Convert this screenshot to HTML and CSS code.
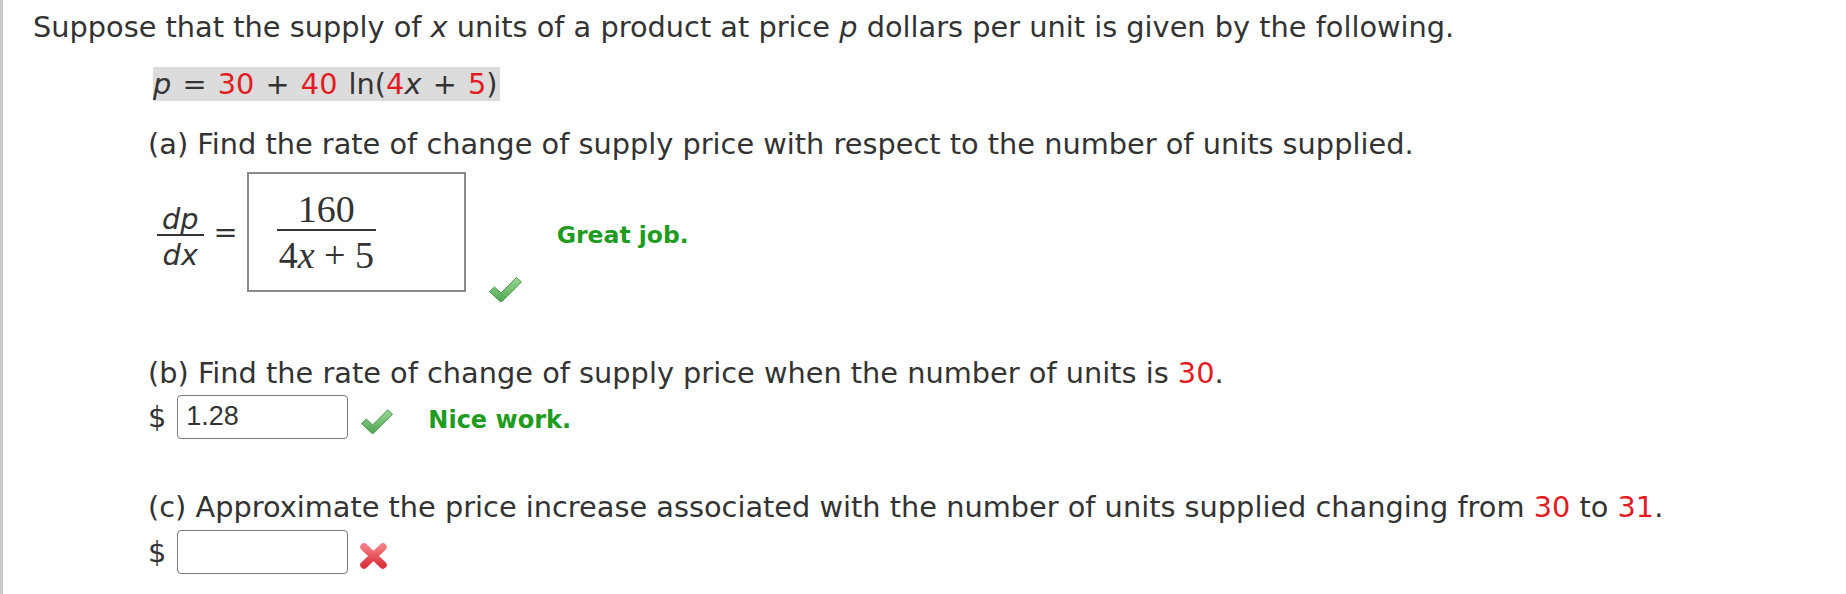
FILE: index.html
```html
<!DOCTYPE html>
<html lang="en">
<head>
<meta charset="utf-8">
<title>Supply price question</title>
<link rel="stylesheet" href="styles.css">
</head>
<body>
<div class="page">
  <p class="intro">Suppose that the supply of <i>x</i> units of a product at price <i>p</i> dollars per unit is given by the following.</p>
  <p class="eqn"><span class="hl"><i>p</i> = <span class="red">30</span> + <span class="red">40</span> ln(<span class="red">4</span><i>x</i> + <span class="red">5</span>)</span></p>

  <div class="part">
    <p class="prompt first">(a) Find the rate of change of supply price with respect to the number of units supplied.</p>
    <div class="row row-a">
      <span class="frac frac-sans"><span class="num"><i>dp</i></span><span class="den"><i>dx</i></span></span>
      <span class="equals">=</span>
      <div class="mathbox">
        <span class="frac frac-serif"><span class="num">160</span><span class="den">4<i>x</i> + 5</span></span>
      </div>
      <svg class="check check-a" width="35" height="27" viewBox="0 0 35 27" aria-hidden="true">
        <defs>
          <linearGradient id="cg1" x1="0" y1="0" x2="0" y2="1">
            <stop offset="0" stop-color="#9ad89a"/>
            <stop offset="1" stop-color="#4fa64f"/>
          </linearGradient>
        </defs>
        <path d="M1.5 15.5 L6.5 11 L13 17 L28.5 1.5 L33.5 6 L14.5 25 Q13 26.5 11.5 25 Z" fill="url(#cg1)" stroke="#4a9a4a" stroke-width="1" stroke-linejoin="round"/>
      </svg>
      <span class="feedback fb-a">Great job.</span>
    </div>
  </div>

  <div class="part">
    <p class="prompt second">(b) Find the rate of change of supply price when the number of units is <span class="red">30</span>.</p>
    <div class="row row-b">
      <span class="dollar">$</span>
      <span class="input">1.28</span>
      <svg class="check check-b" width="34" height="27" viewBox="0 0 35 27" aria-hidden="true">
        <defs>
          <linearGradient id="cg2" x1="0" y1="0" x2="0" y2="1">
            <stop offset="0" stop-color="#9ad89a"/>
            <stop offset="1" stop-color="#4fa64f"/>
          </linearGradient>
        </defs>
        <path d="M1.5 15.5 L6.5 11 L13 17 L28.5 1.5 L33.5 6 L14.5 25 Q13 26.5 11.5 25 Z" fill="url(#cg2)" stroke="#4a9a4a" stroke-width="1" stroke-linejoin="round"/>
      </svg>
      <span class="feedback fb-b">Nice work.</span>
    </div>
  </div>

  <div class="part">
    <p class="prompt third">(c) Approximate the price increase associated with the number of units supplied changing from <span class="red">30</span> to <span class="red">31</span>.</p>
    <div class="row row-c">
      <span class="dollar">$</span>
      <span class="input"></span>
      <svg class="cross" width="29" height="28" viewBox="0 0 29 28" aria-hidden="true">
        <defs>
          <linearGradient id="xg" x1="0" y1="0" x2="0" y2="1">
            <stop offset="0" stop-color="#f27a80"/>
            <stop offset="1" stop-color="#dc3540"/>
          </linearGradient>
        </defs>
        <path d="M5 5 L24 23 M24 5 L5 23" stroke="url(#xg)" stroke-width="7.5" stroke-linecap="round" fill="none"/>
      </svg>
    </div>
  </div>
</div>
</body>
</html>
```

FILE: styles.css
```css
html, body {
  margin: 0;
  padding: 0;
  background: #ffffff;
}

body {
  font-family: "DejaVu Sans", Verdana, sans-serif;
  color: #333333;
}

.page {
  box-sizing: border-box;
  min-height: 594px;
  border-left: 3px solid #c9c9c9;
  padding: 10px 0 0 30px;
  font-size: 28.8px;
  line-height: 34px;
}

p {
  margin: 0;
}

i {
  font-style: italic;
}

.red {
  color: #e31b23;
}

.eqn {
  margin: 23px 0 0 120px;
  word-spacing: 2px;
}

.hl {
  background: #dcdcdc;
  padding-right: 2px;
}

.part {
  margin-left: 115px;
}

.prompt.first {
  margin-top: 26px;
}

.prompt.second {
  margin-top: 64px;
}

.prompt.third {
  margin-top: 51px;
}

.row {
  display: flex;
  align-items: center;
}

.row-a {
  margin: 11px 0 0 9px;
}

.frac {
  display: inline-flex;
  flex-direction: column;
  align-items: stretch;
  text-align: center;
}

.frac-sans {
  line-height: 28.5px;
  margin-top: 10px;
}

.frac-sans .num {
  padding: 0 5px;
  border-bottom: 2px solid #333333;
}

.frac-sans .den {
  padding-top: 5px;
}

.equals {
  margin: 0 9px 0 10px;
}

.mathbox {
  box-sizing: border-box;
  width: 219px;
  height: 120px;
  border: 2px solid #8a8a8a;
  display: flex;
  align-items: center;
  padding-left: 28px;
  background: #ffffff;
}

.frac-serif {
  font-family: "Liberation Serif", "Times New Roman", serif;
  font-size: 38px;
  line-height: 38px;
  color: #333333;
}

.frac-serif .num {
  padding-bottom: 1px;
  border-bottom: 2px solid #333333;
}

.frac-serif .den {
  padding: 5px 2px 0;
  white-space: nowrap;
}

.check {
  display: block;
  flex: none;
}

.check-a {
  align-self: flex-end;
  margin: 0 0 -11px 22px;
}

.feedback {
  color: #1f9c1f;
  font-weight: bold;
  font-size: 23.5px;
  line-height: normal;
}

.fb-a {
  margin: 6px 0 0 34px;
}

.row-b {
  margin-top: 5px;
}

.row-c {
  margin-top: 6px;
}

.dollar {
  margin-left: 0;
}

.input {
  box-sizing: border-box;
  width: 171px;
  height: 44px;
  margin-left: 11px;
  border: 1.5px solid #7a7a7a;
  border-radius: 4px;
  padding-left: 8px;
  font-family: "Liberation Sans", Arial, sans-serif;
  font-size: 27px;
  line-height: 41px;
  color: #333333;
  background: #ffffff;
}

.check-b {
  margin: 9px 0 0 12px;
}

.fb-b {
  font-size: 24px;
  margin: 5px 0 0 34px;
}

.cross {
  display: block;
  flex: none;
  margin: 7px 0 0 11px;
}
```
